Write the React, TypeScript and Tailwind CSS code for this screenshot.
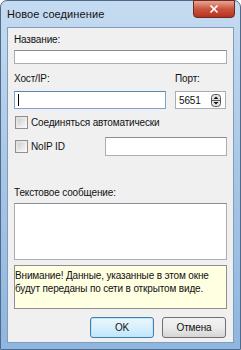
import { X } from "lucide-react";

const font = { fontFamily: '"Liberation Sans", Arial, sans-serif' };

const Field = ({ className }: { className: string }) => (
    <div className={`bg-white border border-[#abadb3] border-t-[#8a8d94] ${className}`}></div>
);

const Check = ({ label }: { label: string }) => (
    <div className="flex items-center gap-[3px]">
        <div className="w-[13px] h-[13px] border border-[#8f8f8f] bg-gradient-to-br from-[#dcdcdc] to-[#fafafa] p-[2px]">
            <div className="w-full h-full bg-gradient-to-br from-[#cfcfcf] to-[#f4f4f4]"></div>
        </div>
        <span>{label}</span>
    </div>
);

const App = () => {
    return (
        <div className="w-[241px] h-[350px] text-[10px] tracking-[-0.15px] leading-[13px] text-[#111]" style={font}>
            <div className="w-full h-full rounded-t-[7px] border border-[#4e6a8c] bg-gradient-to-b from-[#c5dbf1] via-[#a7c6e6] to-[#8fb6df] px-[6px] pb-[6px] flex flex-col">
                {/* TITLE */}
                <div className="h-[26px] flex items-start justify-between">
                    <span className="text-[11px] mt-[7px] tracking-[0.1px]">Новое соединение</span>
                    <div className="w-[42px] h-[18px] -mt-px -mr-px rounded-b-[4px] border border-[#6b2a22] bg-gradient-to-b from-[#e8a592] via-[#c9553f] to-[#b8321c] flex items-center justify-center">
                        <X size={12} strokeWidth={3.5} className="text-white" />
                    </div>
                </div>
                {/* CLIENT */}
                <div className="flex-1 border border-[#7f9db9] bg-[#f0f0f0] px-[6px] pt-[5px] flex flex-col">
                    <span>Название:</span>
                    <Field className="mt-[4px] h-[14px] w-[213px]" />

                    <div className="mt-[8px] flex">
                        <div className="flex flex-col">
                            <span>Хост/IP:</span>
                            <div className="mt-[6px] h-[18px] w-[152px] bg-white border border-[#7da2ce] border-t-[#5c86b8] flex items-center px-[3px]">
                                <div className="w-px h-[12px] bg-black"></div>
                            </div>
                        </div>
                        <div className="ml-[9px] flex flex-col">
                            <span>Порт:</span>
                            <div className="mt-[6px] h-[18px] w-[51px] bg-white border border-[#abadb3] flex items-center justify-between pl-[3px] pr-[4px]">
                                <span>5651</span>
                                <svg width="10" height="13" viewBox="0 0 10 13">
                                    <rect x="0.5" y="0.5" width="9" height="12" rx="3" fill="#e4e4e4" stroke="#555" />
                                    <line x1="1" y1="6.5" x2="9" y2="6.5" stroke="#555" />
                                    <path d="M2.5 5 L5 2.5 L7.5 5 Z" fill="#111" />
                                    <path d="M2.5 8 L5 10.5 L7.5 8 Z" fill="#111" />
                                </svg>
                            </div>
                        </div>
                    </div>

                    <div className="mt-[7px] ml-px">
                        <Check label="Соединяться автоматически" />
                    </div>
                    <div className="mt-[8px] ml-px flex items-center justify-between">
                        <Check label="NoIP ID" />
                        <Field className="h-[19px] w-[122px]" />
                    </div>

                    <span className="mt-[30px]">Текстовое сообщение:</span>
                    <Field className="mt-[4px] h-[57px] w-[213px]" />

                    <div className="mt-[5px] h-[44px] w-[213px] border border-[#8f8f8f] bg-[#ffffe1] leading-[13px] pt-[3px]">
                        Внимание! Данные, указанные в этом окне будут переданы по сети в открытом виде.
                    </div>

                    <div className="mt-[8px] flex justify-end gap-[8px] pr-px">
                        <button className="w-[64px] h-[21px] rounded-[3px] border border-[#3c7fb1] bg-gradient-to-b from-[#eaf6fd] via-[#d9f0fc] to-[#bee6fd] shadow-[inset_0_0_0_1px_#c1e4f6]">OK</button>
                        <button className="w-[64px] h-[21px] rounded-[3px] border border-[#707070] bg-gradient-to-b from-[#f2f2f2] via-[#ebebeb] to-[#d5d5d5]">Отмена</button>
                    </div>
                </div>
            </div>
        </div>
    );
};

export default App;
